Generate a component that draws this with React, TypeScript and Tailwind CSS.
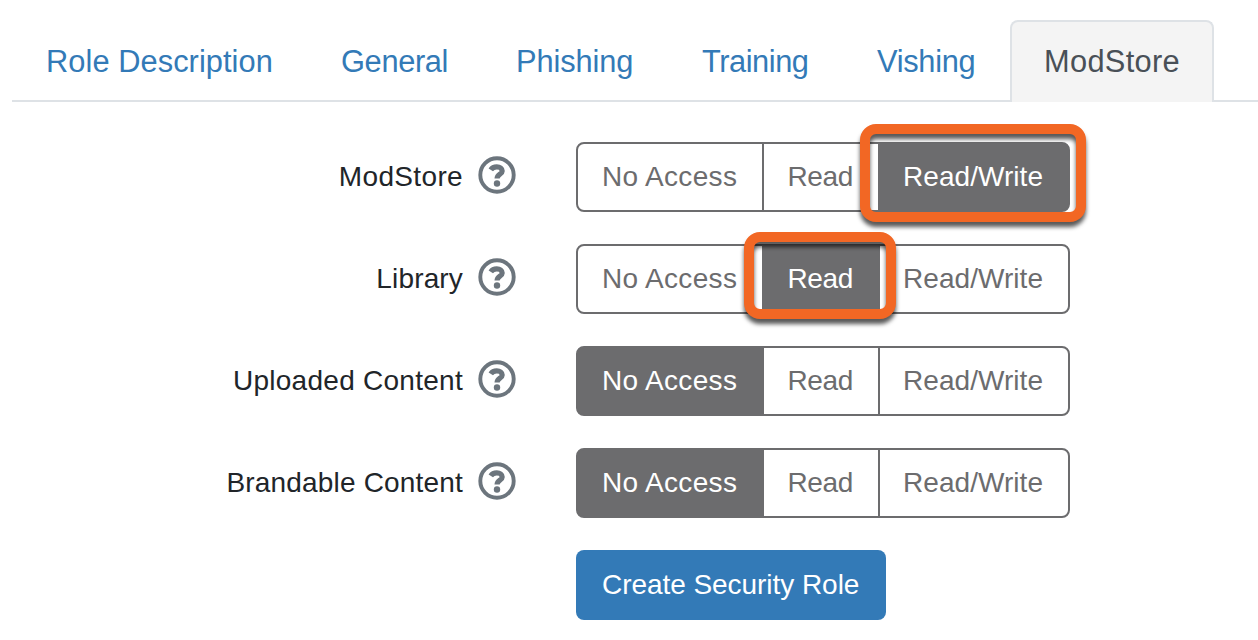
import { clsx } from "clsx";

interface Tab {
  readonly label: string;
  readonly className: string;
}

const TABS: ReadonlyArray<Tab> = [
  { label: "Role Description", className: "w-[295px] tracking-[0.06px]" },
  { label: "General", className: "w-[175px] tracking-[-0.35px]" },
  { label: "Phishing", className: "w-[186px] tracking-[-0.1px]" },
  { label: "Training", className: "w-[175px] tracking-[-0.45px]" },
  { label: "Vishing", className: "w-[167px] tracking-[-0.3px]" },
  { label: "ModStore", className: "w-[204px] tracking-[0.3px]" },
];

const ACTIVE_TAB = "ModStore";

type Access = "No Access" | "Read" | "Read/Write";

const LEVELS: ReadonlyArray<{ value: Access; className: string }> = [
  { value: "No Access", className: "w-[188px] rounded-l-lg pl-6 tracking-[0.33px]" },
  { value: "Read", className: "-ml-0.5 w-[118px] pl-[23.5px] tracking-[-0.4px]" },
  { value: "Read/Write", className: "-ml-0.5 w-[192px] rounded-r-lg pl-[23px] tracking-[0.05px]" },
];

interface Permission {
  readonly label: string;
  readonly labelClassName: string;
  readonly value: Access;
  /** Insets of the callout ring drawn round the chosen level. */
  readonly ring?: string;
}

const PERMISSIONS: ReadonlyArray<Permission> = [
  {
    label: "ModStore",
    labelClassName: "tracking-[0.35px]",
    value: "Read/Write",
    ring: "-top-[20px] -right-[18px] -bottom-[12px] -left-[20px]",
  },
  {
    label: "Library",
    labelClassName: "tracking-[0.15px]",
    value: "Read",
    ring: "-top-[14px] -right-[18px] -bottom-[7px] -left-[20px]",
  },
  { label: "Uploaded Content", labelClassName: "tracking-[0.27px]", value: "No Access" },
  { label: "Brandable Content", labelClassName: "tracking-[0.18px]", value: "No Access" },
];

function IconHelp({ className }: { className?: string }) {
  return (
    <svg viewBox="0 0 38 38" fill="none" stroke="currentColor" className={className} aria-hidden>
      <circle cx="19" cy="19" r="16.7" strokeWidth="3.9" />
      <path
        d="M12.8 13.9C14.2 11.7 16 10.9 18.8 10.9C22 10.9 24.2 12.5 24.2 14.9C24.2 18.3 19.1 18.2 19.1 22.6"
        strokeWidth="5.2"
      />
      <circle cx="19" cy="27.5" r="3.2" fill="currentColor" stroke="none" />
    </svg>
  );
}

function TabBar() {
  return (
    <nav className="ml-3 flex h-[82px] shrink-0 border-b-2 border-[#dee2e6]">
      {TABS.map((tab) => (
        <a
          key={tab.label}
          className={clsx(
            "h-[82px] shrink-0 rounded-t-lg border-2 border-b-0 pt-[17px] pl-8 text-[30.8px] leading-[46px] whitespace-nowrap",
            tab.label === ACTIVE_TAB
              ? "border-[#dee2e6] bg-[#f4f4f4] text-[#495057]"
              : "border-transparent text-[#337ab7]",
            tab.className,
          )}
        >
          {tab.label}
        </a>
      ))}
    </nav>
  );
}

function AccessGroup({ value, ring }: { value: Access; ring?: string }) {
  return (
    <div className="flex" role="group">
      {LEVELS.map((level) => {
        const active = level.value === value;
        return (
          <button
            key={level.value}
            type="button"
            aria-pressed={active}
            className={clsx(
              "relative h-[70px] shrink-0 border-2 border-[#6c6c6e] text-left whitespace-nowrap",
              active ? "z-10 bg-[#6c6c6e] text-white" : "bg-white text-[#6c6c6e]",
              level.className,
            )}
          >
            {level.value}
            {active && ring !== undefined ? (
              <span
                aria-hidden
                className={clsx(
                  "absolute rounded-[16px] border-[10px] border-[#f26724] drop-shadow-[0_5px_2px_rgba(0,0,0,0.65)]",
                  ring,
                )}
              />
            ) : null}
          </button>
        );
      })}
    </div>
  );
}

function PermissionRow({ label, labelClassName, value, ring }: Permission) {
  return (
    <div className="flex h-[70px]">
      <div className="flex w-[516px] items-center justify-end gap-[15px] text-[#212529]">
        <span className={labelClassName}>{label}</span>
        <IconHelp className="-mt-1 size-[38px] text-[#6c757d]" />
      </div>
      <div className="ml-[60px]">
        <AccessGroup value={value} ring={ring} />
      </div>
    </div>
  );
}

export default function App() {
  return (
    <div className="flex h-[640px] w-[1258px] flex-col overflow-hidden bg-white pt-5 font-['Liberation_Sans',Arial,sans-serif] text-[28px] leading-[42px]">
      <TabBar />
      <form className="mt-10 flex flex-col gap-8">
        {PERMISSIONS.map((permission) => (
          <PermissionRow key={permission.label} {...permission} />
        ))}
        <button
          type="button"
          className="ml-[576px] h-[70px] w-[310px] rounded-lg bg-[#337ab7] pl-[26px] text-left tracking-[-0.05px] whitespace-nowrap text-white"
        >
          Create Security Role
        </button>
      </form>
    </div>
  );
}
